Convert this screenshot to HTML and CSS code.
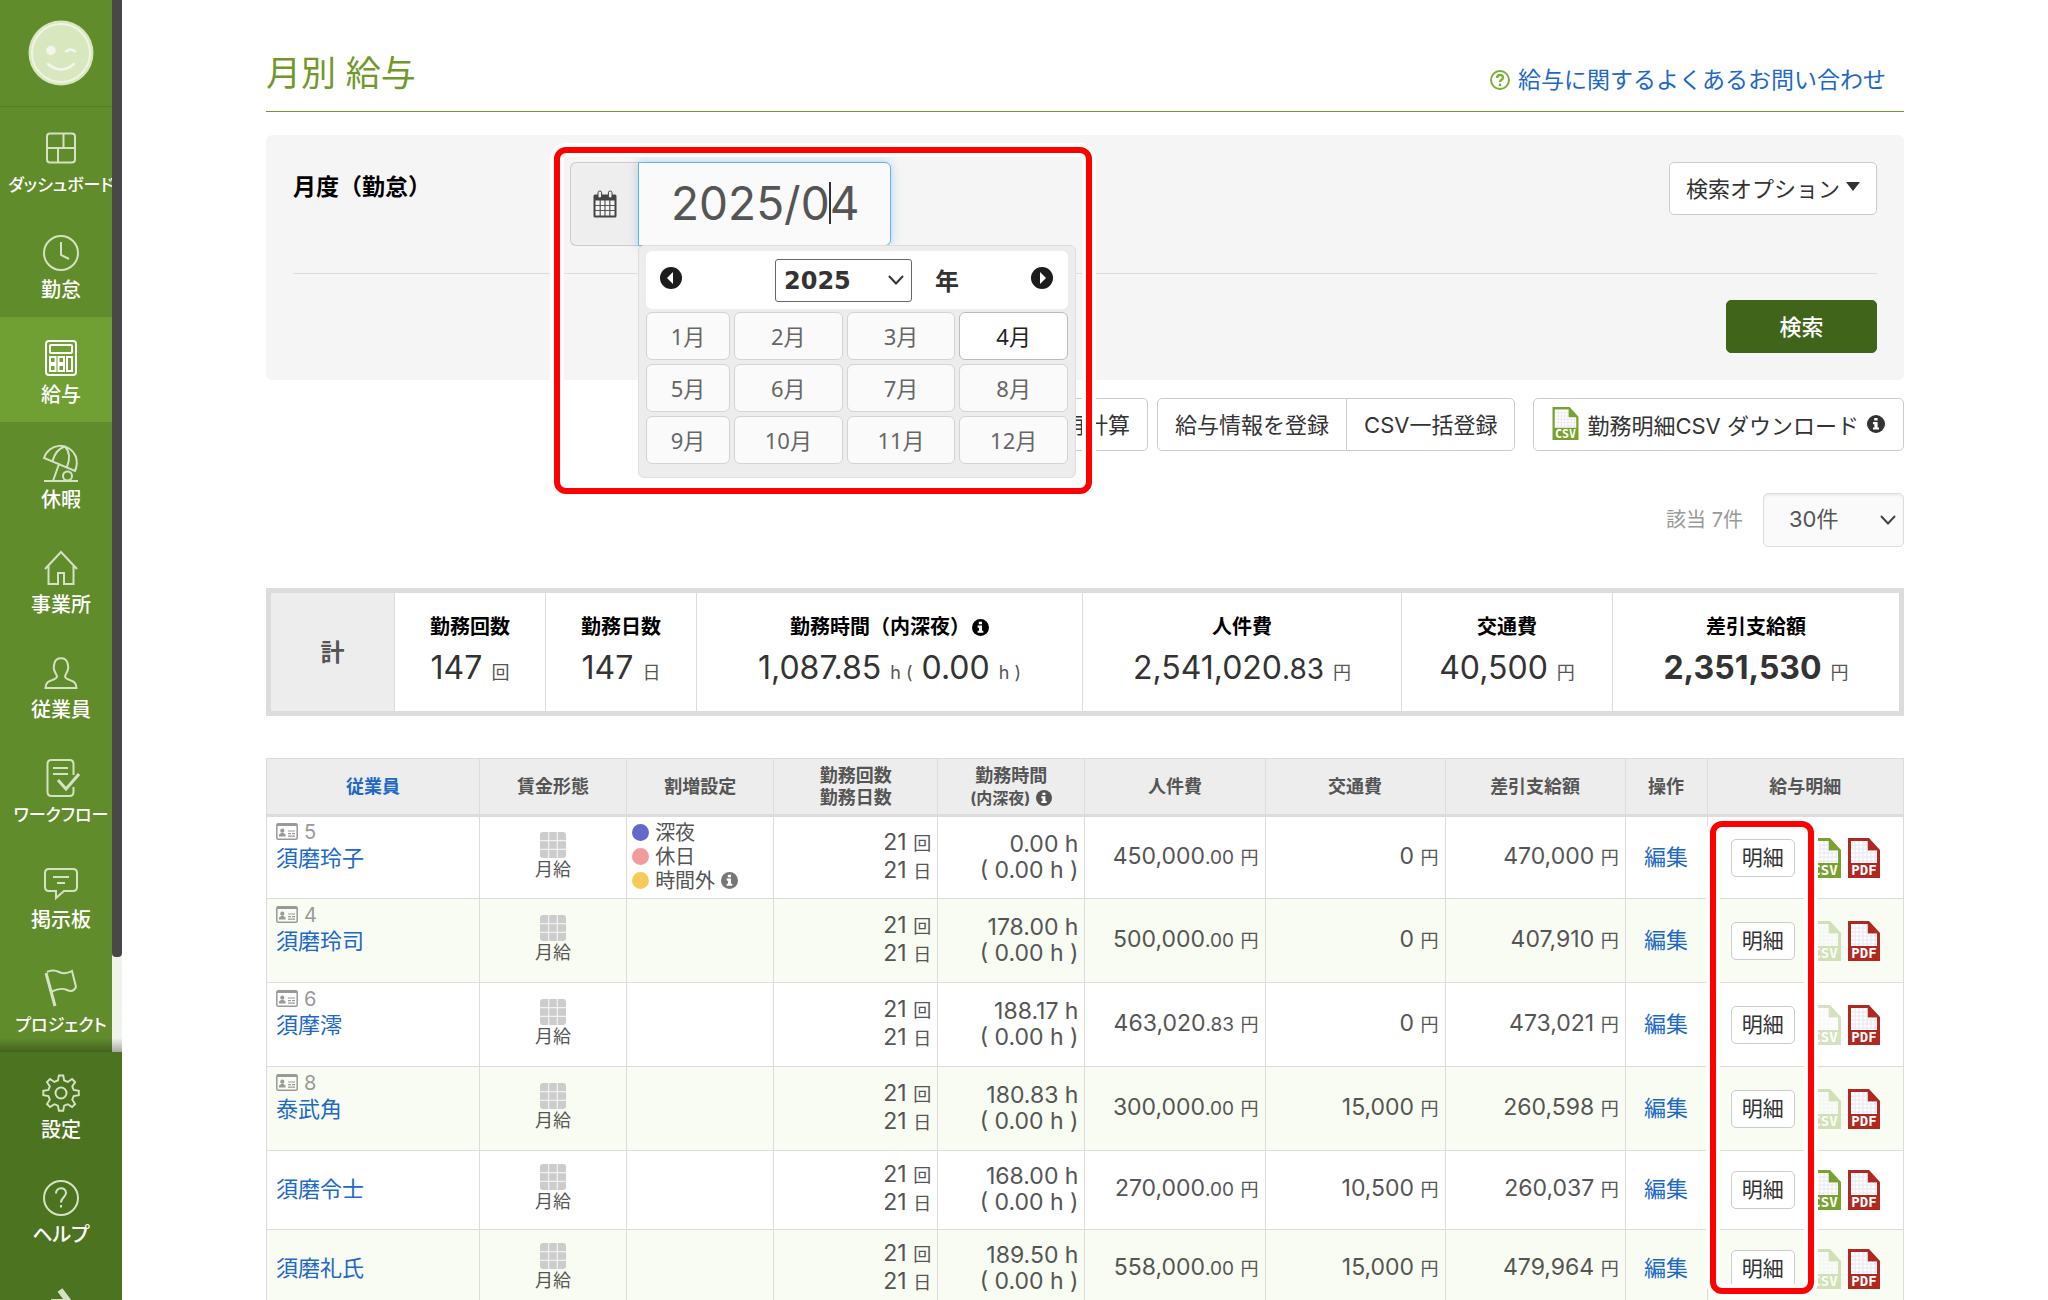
FILE: index.html
```html
<!DOCTYPE html>
<html lang="ja">
<head>
<meta charset="utf-8">
<meta name="viewport" content="width=device-width, initial-scale=1">
<title>月別 給与</title>
<link rel="stylesheet" href="styles.css">
</head>
<body>
<svg class="defs" aria-hidden="true">
  <defs>
    <symbol id="i-info" viewBox="0 0 18 18"><circle cx="9" cy="9" r="9" fill="currentColor"/><path d="M7.2 3h3.4v2.6H7.2zM6 7h4.6v5.4H12V14.600H6v-2.200h1.400V9.200H6z" fill="#fff"/></symbol>
    <symbol id="i-id" viewBox="0 0 22 17"><rect x=".8" y=".8" width="20.400" height="15.400" rx="1.500" fill="none" stroke="currentColor" stroke-width="1.500"/><path d="M1 1h20v2H1zM3 13.500v-2l2-1.500h2.600l2 1.500v2zM12 7.400h7v1.200h-7zM12 10h3v1.200h-3zM16 10h3v1.200h-3zM12 12.500h7v1.200h-7z" fill="currentColor"/><circle cx="6.300" cy="7.700" r="2.100" fill="currentColor"/></symbol>
    <symbol id="i-grid" viewBox="0 0 26 26"><rect width="26" height="26" rx="3" fill="#ccc"/><path d="M8.700 0v26M17.300 0v26M0 8.700h26M0 17.300h26" stroke="#fff" stroke-width="1.200" opacity=".75"/></symbol>
    <symbol id="i-file" viewBox="0 0 32 40"><path d="M0 0h21l11 12v28H0z" fill="currentColor"/><path d="M3 3h16.500v9.500H29V25H3z" fill="#fff"/><path d="M7 3v22M11 3v22M15 3v22M19 3v22M23 12.500V25M27 12.500V25M3 7h16.500M3 11h16.500M3 15h26M3 19h26M3 23h26" stroke="#e6e6ee" stroke-width="1" fill="none"/></symbol>
    <symbol id="i-chevron" viewBox="0 0 18 12"><path d="M2 2l7 7.500L16 2" fill="none" stroke="currentColor" stroke-width="2"/></symbol>
  </defs>
</svg>
<div class="app">
  <aside class="sidebar">
    <div class="profile">
      <svg width="66" height="66" viewBox="0 0 66 66"><circle cx="33" cy="33" r="32.500" fill="#d9e7bf"/><circle cx="33" cy="33" r="29" fill="none" stroke="#f0f4e6" stroke-width="2"/><circle cx="23" cy="30.500" r="4.700" fill="#f3f6ec"/><path d="M38 31.500q4.500-4 9 0M20 44q13 11 26 0" fill="none" stroke="#f3f6ec" stroke-width="2.400" stroke-linecap="round"/></svg>
    </div>
    <nav class="nav">
      <a class="nav-item" href="#"><svg class="nav-icon" viewBox="0 0 38 38"><rect x="5" y="4.500" width="28" height="29" rx="3"/><path d="M5 19h28M21.500 4.500V19M16 19v14.500"/></svg><span class="long">ダッシュボード</span></a>
      <a class="nav-item" href="#"><svg class="nav-icon" viewBox="0 0 38 38"><circle cx="19" cy="19" r="17"/><path d="M19 8v13l8 4"/></svg><span>勤怠</span></a>
      <a class="nav-item active" href="#"><svg class="nav-icon" viewBox="0 0 38 38"><rect x="4" y="2" width="30" height="34" rx="3"/><rect x="8" y="6" width="22" height="8" rx="1"/><path d="M8 18h5.500v6H8zM16.500 18H22v6h-5.500zM8 26h5.500v6H8zM16.500 26H22v6h-5.500zM25 18h5v14h-5z"/></svg><span>給与</span></a>
      <a class="nav-item" href="#"><svg class="nav-icon" viewBox="0 0 38 38"><path d="M2 14C7-1 27-3 34 13q2 7-1 14zM10.500 17Q14 5 23 2.500Q30 10 25 23M17 20l-6 17M2 37h34"/><circle cx="25.500" cy="32" r="4.500"/></svg><span>休暇</span></a>
      <a class="nav-item" href="#"><svg class="nav-icon" viewBox="0 0 38 38"><path d="M3 20L19 3l16 17M6.500 17v18H16V24h6v11h9.500V17"/></svg><span>事業所</span></a>
      <a class="nav-item" href="#"><svg class="nav-icon" viewBox="0 0 38 38"><path d="M3.500 34c0-6 4-7 8-8.500s4-3 2.500-5.500c-3-5-2.500-7-1.500-11 1.500-6.500 11.500-6.500 13 0 1 4 1.500 6-1.500 11-1.500 2.500-1.500 4 2.500 5.500s8 2.500 8 8.500z"/></svg><span>従業員</span></a>
      <a class="nav-item" href="#"><svg class="nav-icon" viewBox="0 0 38 38"><path d="M31.500 16V5q0-4-4-4h-18q-4 0-4 4v28q0 4 4 4h18q4 0 4-4v-5M11 9h15M11 15h15"/><path d="M16 21l8 9 13-15" stroke-width="3"/></svg><span class="long">ワークフロー</span></a>
      <a class="nav-item" href="#"><svg class="nav-icon" viewBox="0 0 38 38"><path d="M7 5h24q4 0 4 4v14q0 4-4 4h-9l-8 7v-7H7q-4 0-4-4V9q0-4 4-4zM11 13h16M15 19h8"/></svg><span>掲示板</span></a>
      <a class="nav-item" href="#"><svg class="nav-icon" viewBox="0 0 38 38"><path d="M4 4l9 33" stroke-width="3"/><path d="M5 3q6-3 12 0t13-1l4 16q-3 6-9 3t-16 2"/></svg><span class="long">プロジェクト</span></a>
      <div class="nav-track"><div class="nav-thumb"></div></div>
    </nav>
    <nav class="nav-footer">
      <a class="nav-item" href="#"><svg class="nav-icon" viewBox="0 0 38 38"><path d="M16.700 1.500h4.600l1 5.300 3.800 1.600 4.500-3.100 3.200 3.200-3 4.600 1.500 3.700 5.400 1v4.500l-5.400 1-1.500 3.800 3 4.500-3.200 3.200-4.500-3-3.800 1.500-1 5.400h-4.600l-1-5.400-3.800-1.500-4.500 3-3.200-3.200 3-4.500-1.500-3.800-5.400-1v-4.500l5.400-1 1.500-3.700-3-4.600 3.200-3.200 4.500 3.100 3.800-1.600z" transform="translate(1 0) scale(.95)"/><circle cx="19" cy="19" r="5.500"/></svg><span>設定</span></a>
      <a class="nav-item" href="#"><svg class="nav-icon" viewBox="0 0 38 38"><circle cx="19" cy="19" r="17"/><path d="M14 14.500c0-7 10-7 10-.5 0 4-5 4.500-5 9.500M19 26v2.500"/></svg><span>ヘルプ</span></a>
      <a class="nav-item" href="#" aria-label="次へ"><svg class="nav-icon" viewBox="0 0 38 38"><path d="M9 18h18M18 6l9 12-9 12" stroke-width="6"/></svg></a>
    </nav>
  </aside>

  <main class="main">
    <header class="page-head">
      <h1>月別 給与</h1>
      <a class="faq" href="#"><svg width="20" height="20" viewBox="0 0 20 20"><circle cx="10" cy="10" r="9" fill="none" stroke="#7cae3a" stroke-width="2"/><path d="M7 8c0-4 6-4 6-.5 0 2.500-3 2.500-3 4.500M10 13.500V16" fill="none" stroke="#7cae3a" stroke-width="2.400"/></svg>給与に関するよくあるお問い合わせ</a>
    </header>

    <section class="filter">
      <div class="filter-row">
        <label class="filter-label" for="month">月度（勤怠）</label>
        <div class="month-field">
          <span class="addon"><svg width="24" height="28" viewBox="0 0 24 28"><path d="M2 4.500h20q1.500 0 1.500 1.500v20q0 1.500-1.500 1.500H2Q.5 27.500.5 26V6Q.5 4.500 2 4.500z" fill="#444"/><path d="M2.500 10.500h19v15h-19z" fill="#f4f4f4"/><path d="M7.200 10v16M12 10v16M16.800 10v16M2 15.500h20M2 20.500h20" stroke="#555" stroke-width="1.200"/><rect x="5" y="1" width="3.600" height="7" rx="1.800" fill="#eee" stroke="#444"/><rect x="15.400" y="1" width="3.600" height="7" rx="1.800" fill="#eee" stroke="#444"/></svg></span>
          <input id="month" class="month-input" type="text" value="2025/04">
          <span class="caret"></span>
          <div class="picker">
            <div class="picker-head">
              <button class="round" type="button" aria-label="前年"><svg width="22" height="22" viewBox="0 0 22 22"><circle cx="11" cy="11" r="11" fill="#1c1c1c"/><path d="M13 5v12l-6-6z" fill="#fff"/></svg></button>
              <div class="year">
                <span class="select-wrap"><select class="year-select" aria-label="年"><option>2025</option></select><svg class="chev" width="18" height="12"><use href="#i-chevron"/></svg></span>
                <span>年</span>
              </div>
              <button class="round" type="button" aria-label="翌年"><svg width="22" height="22" viewBox="0 0 22 22"><circle cx="11" cy="11" r="11" fill="#1c1c1c"/><path d="M9 5v12l6-6z" fill="#fff"/></svg></button>
            </div>
            <div class="months">
              <button type="button">1月</button><button type="button">2月</button><button type="button">3月</button><button type="button" class="on">4月</button>
              <button type="button">5月</button><button type="button">6月</button><button type="button">7月</button><button type="button">8月</button>
              <button type="button">9月</button><button type="button">10月</button><button type="button">11月</button><button type="button">12月</button>
            </div>
          </div>
        </div>
        <button class="btn options" type="button">検索オプション<svg width="14" height="9" viewBox="0 0 14 9"><path d="M0 0h14L7 9z" fill="#333"/></svg></button>
      </div>
      <div class="filter-actions"><button class="btn primary" type="submit">検索</button></div>
      <div class="mark mark-picker"></div>
    </section>

    <div class="toolbar">
      <button class="btn" type="button">再計算</button>
      <div class="group"><button class="btn" type="button">給与情報を登録</button><button class="btn" type="button">CSV一括登録</button></div>
      <button class="btn csv-download" type="button"><svg class="green" width="27" height="33" viewBox="0 0 32 40"><use href="#i-file"/><text class="ftype" x="16" y="37">CSV</text></svg><span>勤務明細CSV ダウンロード</span><svg width="18" height="18"><use href="#i-info"/></svg></button>
    </div>

    <div class="pager">
      <label for="count">該当 7件</label>
      <span class="select-wrap"><select id="count" class="count-select"><option>30件</option></select><svg class="chev" width="18" height="12"><use href="#i-chevron"/></svg></span>
    </div>

    <dl class="summary">
      <div class="total">計</div>
      <div><dt>勤務回数</dt><dd>147 <small>回</small></dd></div>
      <div><dt>勤務日数</dt><dd>147 <small>日</small></dd></div>
      <div><dt>勤務時間（内深夜）<svg width="17" height="17"><use href="#i-info"/></svg></dt><dd>1,087.85 <small>h (</small> 0.00 <small>h )</small></dd></div>
      <div><dt>人件費</dt><dd>2,541,020<span class="dec">.83</span> <small>円</small></dd></div>
      <div><dt>交通費</dt><dd>40,500 <small>円</small></dd></div>
      <div><dt>差引支給額</dt><dd><b>2,351,530</b> <small>円</small></dd></div>
    </dl>

    <div class="table-wrap">
      <table class="list">
        <colgroup><col class="c-name"><col class="c-type"><col class="c-type"><col class="c-count"><col class="c-type"><col class="c-money"><col class="c-money"><col class="c-money"><col class="c-op"><col class="c-slip"></colgroup>
        <thead>
          <tr><th><a href="#">従業員</a></th><th>賃金形態</th><th>割増設定</th><th>勤務回数<br>勤務日数</th><th>勤務時間<br><span class="sub">(内深夜) <svg width="16" height="16"><use href="#i-info"/></svg></span></th><th>人件費</th><th>交通費</th><th>差引支給額</th><th>操作</th><th>給与明細</th></tr>
        </thead>
        <tbody>
          <tr><td class="name"><span class="id"><svg width="22" height="17"><use href="#i-id"/></svg>5</span><a href="#">須磨玲子</a></td><td class="type"><svg width="26" height="26"><use href="#i-grid"/></svg>月給</td><td class="extra"><span><i class="dot night"></i>深夜</span><span><i class="dot holiday"></i>休日</span><span><i class="dot over"></i>時間外<svg width="17" height="17"><use href="#i-info"/></svg></span></td><td>21 <small>回</small><br>21 <small>日</small></td><td>0.00 h<br>( 0.00 h )</td><td>450,000<span class="dec">.00</span> <small>円</small></td><td>0 <small>円</small></td><td>470,000 <small>円</small></td><td class="op"><a href="#">編集</a></td><td class="slip"><div><button class="detail" type="button">明細</button><a href="#"><svg class="green" width="32" height="40" viewBox="0 0 32 40"><use href="#i-file"/><text class="ftype" x="16" y="37">CSV</text></svg></a><a href="#"><svg class="red" width="32" height="40" viewBox="0 0 32 40"><use href="#i-file"/><text class="ftype" x="16" y="37">PDF</text></svg></a></div></td></tr>
          <tr><td class="name"><span class="id"><svg width="22" height="17"><use href="#i-id"/></svg>4</span><a href="#">須磨玲司</a></td><td class="type"><svg width="26" height="26"><use href="#i-grid"/></svg>月給</td><td></td><td>21 <small>回</small><br>21 <small>日</small></td><td>178.00 h<br>( 0.00 h )</td><td>500,000<span class="dec">.00</span> <small>円</small></td><td>0 <small>円</small></td><td>407,910 <small>円</small></td><td class="op"><a href="#">編集</a></td><td class="slip"><div><button class="detail" type="button">明細</button><a href="#"><svg class="green off" width="32" height="40" viewBox="0 0 32 40"><use href="#i-file"/><text class="ftype" x="16" y="37">CSV</text></svg></a><a href="#"><svg class="red" width="32" height="40" viewBox="0 0 32 40"><use href="#i-file"/><text class="ftype" x="16" y="37">PDF</text></svg></a></div></td></tr>
          <tr><td class="name"><span class="id"><svg width="22" height="17"><use href="#i-id"/></svg>6</span><a href="#">須摩澪</a></td><td class="type"><svg width="26" height="26"><use href="#i-grid"/></svg>月給</td><td></td><td>21 <small>回</small><br>21 <small>日</small></td><td>188.17 h<br>( 0.00 h )</td><td>463,020<span class="dec">.83</span> <small>円</small></td><td>0 <small>円</small></td><td>473,021 <small>円</small></td><td class="op"><a href="#">編集</a></td><td class="slip"><div><button class="detail" type="button">明細</button><a href="#"><svg class="green off" width="32" height="40" viewBox="0 0 32 40"><use href="#i-file"/><text class="ftype" x="16" y="37">CSV</text></svg></a><a href="#"><svg class="red" width="32" height="40" viewBox="0 0 32 40"><use href="#i-file"/><text class="ftype" x="16" y="37">PDF</text></svg></a></div></td></tr>
          <tr><td class="name"><span class="id"><svg width="22" height="17"><use href="#i-id"/></svg>8</span><a href="#">泰武角</a></td><td class="type"><svg width="26" height="26"><use href="#i-grid"/></svg>月給</td><td></td><td>21 <small>回</small><br>21 <small>日</small></td><td>180.83 h<br>( 0.00 h )</td><td>300,000<span class="dec">.00</span> <small>円</small></td><td>15,000 <small>円</small></td><td>260,598 <small>円</small></td><td class="op"><a href="#">編集</a></td><td class="slip"><div><button class="detail" type="button">明細</button><a href="#"><svg class="green off" width="32" height="40" viewBox="0 0 32 40"><use href="#i-file"/><text class="ftype" x="16" y="37">CSV</text></svg></a><a href="#"><svg class="red" width="32" height="40" viewBox="0 0 32 40"><use href="#i-file"/><text class="ftype" x="16" y="37">PDF</text></svg></a></div></td></tr>
          <tr class="short"><td class="name"><a href="#">須磨令士</a></td><td class="type"><svg width="26" height="26"><use href="#i-grid"/></svg>月給</td><td></td><td>21 <small>回</small><br>21 <small>日</small></td><td>168.00 h<br>( 0.00 h )</td><td>270,000<span class="dec">.00</span> <small>円</small></td><td>10,500 <small>円</small></td><td>260,037 <small>円</small></td><td class="op"><a href="#">編集</a></td><td class="slip"><div><button class="detail" type="button">明細</button><a href="#"><svg class="green" width="32" height="40" viewBox="0 0 32 40"><use href="#i-file"/><text class="ftype" x="16" y="37">CSV</text></svg></a><a href="#"><svg class="red" width="32" height="40" viewBox="0 0 32 40"><use href="#i-file"/><text class="ftype" x="16" y="37">PDF</text></svg></a></div></td></tr>
          <tr class="short"><td class="name"><a href="#">須磨礼氏</a></td><td class="type"><svg width="26" height="26"><use href="#i-grid"/></svg>月給</td><td></td><td>21 <small>回</small><br>21 <small>日</small></td><td>189.50 h<br>( 0.00 h )</td><td>558,000<span class="dec">.00</span> <small>円</small></td><td>15,000 <small>円</small></td><td>479,964 <small>円</small></td><td class="op"><a href="#">編集</a></td><td class="slip"><div><button class="detail" type="button">明細</button><a href="#"><svg class="green off" width="32" height="40" viewBox="0 0 32 40"><use href="#i-file"/><text class="ftype" x="16" y="37">CSV</text></svg></a><a href="#"><svg class="red" width="32" height="40" viewBox="0 0 32 40"><use href="#i-file"/><text class="ftype" x="16" y="37">PDF</text></svg></a></div></td></tr>
        </tbody>
      </table>
      <div class="mark mark-detail"></div>
    </div>
  </main>
</div>
</body>
</html>
```
FILE: styles.css
```css
* { box-sizing: border-box; }
body {
  margin: 0;
  font-family: Inter, "Noto Sans CJK JP", sans-serif;
  font-size: 22px;
  color: #333;
  background: #fff;
}
button, input, select { font: inherit; color: inherit; }
button { cursor: pointer; }
a { color: #2068c8; text-decoration: none; }
.defs { position: absolute; width: 0; height: 0; }
.app { display: flex; height: 100vh; overflow: hidden; }

/* sidebar */
.sidebar {
  width: 122px;
  flex: none;
  display: flex;
  flex-direction: column;
  position: relative;
  background: #618c2c;
}
.profile {
  height: 107px;
  flex: none;
  padding-top: 20px;
  text-align: center;
  border-bottom: 1px solid #557d25;
}
.nav { flex: 1; min-height: 0; overflow: hidden; }
.nav::after {
  content: "";
  position: absolute;
  left: 0;
  right: 0;
  bottom: 248px;
  height: 14px;
  background: linear-gradient(transparent, rgba(0, 0, 0, .3));
}
.nav-item {
  display: flex;
  flex-direction: column;
  align-items: center;
  gap: 3px;
  height: 105px;
  padding-top: 22px;
  color: #fff;
  font-size: 20px;
  font-weight: 500;
  line-height: 30px;
  white-space: nowrap;
  font-feature-settings: "palt";
}
.nav-item .long { font-size: 17px; }
.nav-item.active { background: #70a033; }
.nav-icon {
  width: 38px;
  height: 38px;
  flex: none;
  fill: none;
  stroke: #d5e2c4;
  stroke-width: 2;
}
.active .nav-icon { stroke: #fff; }
.nav-track {
  position: absolute;
  top: 0;
  right: 0;
  bottom: 248px;
  width: 10px;
  background: #f0f3ea;
}
.nav-thumb { height: 91%; background: #484848; border-radius: 0 0 4px 4px; }
.nav-footer { height: 248px; flex: none; overflow: hidden; background: #4c731f; }

/* page */
.main { flex: 1; min-width: 0; overflow-y: auto; scrollbar-width: none; padding: 0 144px; }
.page-head {
  display: flex;
  justify-content: space-between;
  align-items: flex-end;
  height: 112px;
  padding: 0 18px 12px 0;
  border-bottom: 1px solid #71982b;
}
h1 { margin: 0; font-size: 35px; font-weight: 400; line-height: 52px; color: #71982b; }
.faq { display: flex; align-items: center; gap: 8px; font-size: 23px; line-height: 38px; }

.btn {
  display: inline-flex;
  align-items: center;
  justify-content: center;
  gap: 8px;
  height: 53px;
  padding: 0 17px 4px;
  border: 1px solid #ccc;
  border-radius: 5px;
  background: #fff;
  font-size: 22px;
  white-space: nowrap;
}
.btn.options { padding: 0 16px 4px; gap: 6px; }
.btn.csv-download { padding: 0 18px 2px; }
.btn.primary { width: 151px; border-color: #40641a; background: #40641a; color: #fff; font-weight: 500; }

.filter {
  position: relative;
  margin-top: 23px;
  padding: 27px 27px;
  border-radius: 6px;
  background: #f5f5f5;
}
.filter-row {
  display: flex;
  align-items: flex-start;
  height: 112px;
  border-bottom: 1px solid #ddd;
}
.filter-label { width: 277px; flex: none; font-size: 23px; font-weight: 700; line-height: 50px; color: #000; }
.filter-row > .btn { margin-left: auto; }
.filter-actions { display: flex; justify-content: flex-end; padding-top: 26px; }
.month-field { position: relative; display: flex; height: 84px; }
.addon {
  width: 68px;
  display: flex;
  align-items: center;
  justify-content: center;
  border: 1px solid #ccc;
  border-right: 0;
  border-radius: 6px 0 0 6px;
  background: #eee;
}
.month-input {
  width: 253px;
  padding: 0 32px 2px;
  border: 1px solid #66afe9;
  border-radius: 0 6px 6px 0;
  background: #fafafa;
  box-shadow: 0 0 10px rgba(102, 175, 233, .5);
  font-size: 46px;
  color: #555;
  outline: 0;
}
.caret { position: absolute; left: 259px; top: 20px; width: 2px; height: 42px; background: #333; }
.picker {
  position: absolute;
  z-index: 1;
  left: 68px;
  top: 83px;
  width: 438px;
  padding: 5px 7px 13px;
  border: 1px solid #ddd;
  border-radius: 6px;
  background: #ededed;
  font-family: "Noto Sans", "Noto Sans CJK JP", sans-serif;
}
.picker-head {
  display: grid;
  grid-template-columns: 50px 1fr 52px;
  align-items: center;
  height: 58px;
  border-radius: 6px;
  background: #fff;
}
.round { display: flex; justify-content: center; padding: 0 0 4px; border: 0; background: none; }
.year { display: flex; justify-content: flex-end; align-items: center; gap: 23px; padding-right: 57px; font-size: 24px; font-weight: 700; line-height: 43px; }
.select-wrap { display: grid; align-items: center; }
.select-wrap > * { grid-area: 1 / 1; }
.select-wrap select { appearance: none; }
.chev { justify-self: end; margin-right: 7px; pointer-events: none; }
.year-select {
  width: 137px;
  height: 43px;
  padding: 0 8px;
  border: 1px solid #666;
  border-radius: 3px;
  background: #fff;
  font-family: "DejaVu Sans", sans-serif;
  font-size: 24px;
  font-weight: 700;
}
.months { display: grid; grid-template-columns: 84px 1fr 1fr 1fr; gap: 4px; padding-top: 3px; }
.months button {
  height: 48px;
  padding: 0 0 3px;
  border: 1px solid #d3d3d3;
  border-radius: 6px;
  background: #fafafa;
  color: #666;
}
.months .on { background: #fff; border-color: #bbb; color: #222; }

.mark {
  position: absolute;
  z-index: 2;
  border: 6px solid #f00;
  border-radius: 12px;
  box-shadow: 0 0 0 4px #fff, inset 0 0 0 4px #fff;
  pointer-events: none;
}
.mark-picker { left: 288px; top: 12px; width: 538px; height: 347px; }
.mark-detail { right: 90px; top: 63px; width: 104px; height: 473px; }

.toolbar { display: flex; justify-content: flex-end; margin-top: 18px; }
.group { display: flex; margin: 0 18px 0 9px; }
.group .btn:first-child { border-radius: 5px 0 0 5px; }
.group .btn:last-child { border-radius: 0 5px 5px 0; margin-left: -1px; }

.pager { display: flex; justify-content: flex-end; align-items: center; gap: 20px; margin-top: 42px; font-size: 20px; color: #999; }
.pager label { padding-bottom: 3px; }
.count-select {
  width: 141px;
  height: 54px;
  padding: 0 25px 2px;
  border: 1px solid #ddd;
  border-radius: 5px;
  background: #fafafa;
  box-shadow: inset 0 2px 2px #eee;
  font-size: 22px;
  color: #555;
}
.pager .chev { color: #444; }

.summary {
  display: grid;
  grid-template-columns: 123fr 151fr 151fr 386fr 319fr 211fr 287fr;
  height: 128px;
  margin: 41px 0 0;
  border: 5px solid #dcdcdc;
  text-align: center;
}
.summary > div { display: flex; flex-direction: column; padding-top: 19px; border-left: 1px solid #dcdcdc; white-space: nowrap; }
.summary > .total { padding: 0 0 4px; justify-content: center; border: 0; background: #ededed; font-size: 24px; font-weight: 700; color: #555; }
dt { display: flex; justify-content: center; align-items: center; gap: 2px; font-size: 20px; font-weight: 700; line-height: 30px; color: #000; }
dd { margin: 4px 0 0; font-size: 32px; line-height: 44px; }
dd small { font-size: 18px; color: #555; }
dd .dec { font-size: 28px; }

.table-wrap { position: relative; margin-top: 42px; }
.list { width: 100%; table-layout: fixed; border-collapse: collapse; color: #555; }
.c-name { width: 13%; }
.c-type { width: 9%; }
.c-count { width: 10%; }
.c-money { width: 11%; }
.c-op { width: 5%; }
.c-slip { width: 12%; }
.list th, .list td { border: 1px solid #dcdcdc; }
.list th { height: 57px; padding: 0; background: #ededed; border-bottom-width: 3px; font-size: 18px; font-weight: 700; line-height: 22px; }
.sub { display: inline-flex; align-items: center; gap: 6px; font-size: 16px; }
.list td { height: 84px; padding: 0 6px 2px; font-size: 23px; line-height: 26px; text-align: right; white-space: nowrap; }
.list tbody tr:first-child td { height: 83px; }
.list .short td { height: 79px; }
.list tbody tr:nth-child(even) { background: #f9fcf2; }
.list small { font-size: 18px; }
.list td .dec { font-size: 19px; }
.list .name { padding: 0 9px 2px; font-size: 22px; text-align: left; }
.name a { display: block; line-height: 28px; }
.id { display: flex; align-items: center; gap: 6px; margin-top: -22px; font-size: 20px; line-height: 24px; color: #999; }
.list .type { text-align: center; font-size: 18px; line-height: 24px; }
.type svg { display: block; margin: 0 auto; }
.list .extra { padding: 0 5px 2px; }
.extra span { display: flex; align-items: center; gap: 6px; font-size: 20px; line-height: 24px; }
.extra svg { color: #777; }
.dot { width: 17px; height: 17px; border-radius: 50%; }
.night { background: #6468c8; }
.holiday { background: #f29b9b; }
.over { background: #f8ca58; }
.list .op { padding: 0 0 2px; font-size: 22px; text-align: center; }
.list .slip { padding: 0; }
.slip div { display: flex; justify-content: center; align-items: center; gap: 7px; }
.slip a { display: flex; }
.detail {
  width: 64px;
  height: 38px;
  margin-right: 7px;
  padding: 0;
  border: 1px solid #ccc;
  border-radius: 5px;
  background: #fff;
  font-size: 21px;
  line-height: 30px;
  color: #333;
}
.green { color: #78a22f; }
.red { color: #b0281f; }
.off { opacity: .3; }
.ftype { font: 700 14px "DejaVu Sans Mono", monospace; fill: #fff; text-anchor: middle; }
```
